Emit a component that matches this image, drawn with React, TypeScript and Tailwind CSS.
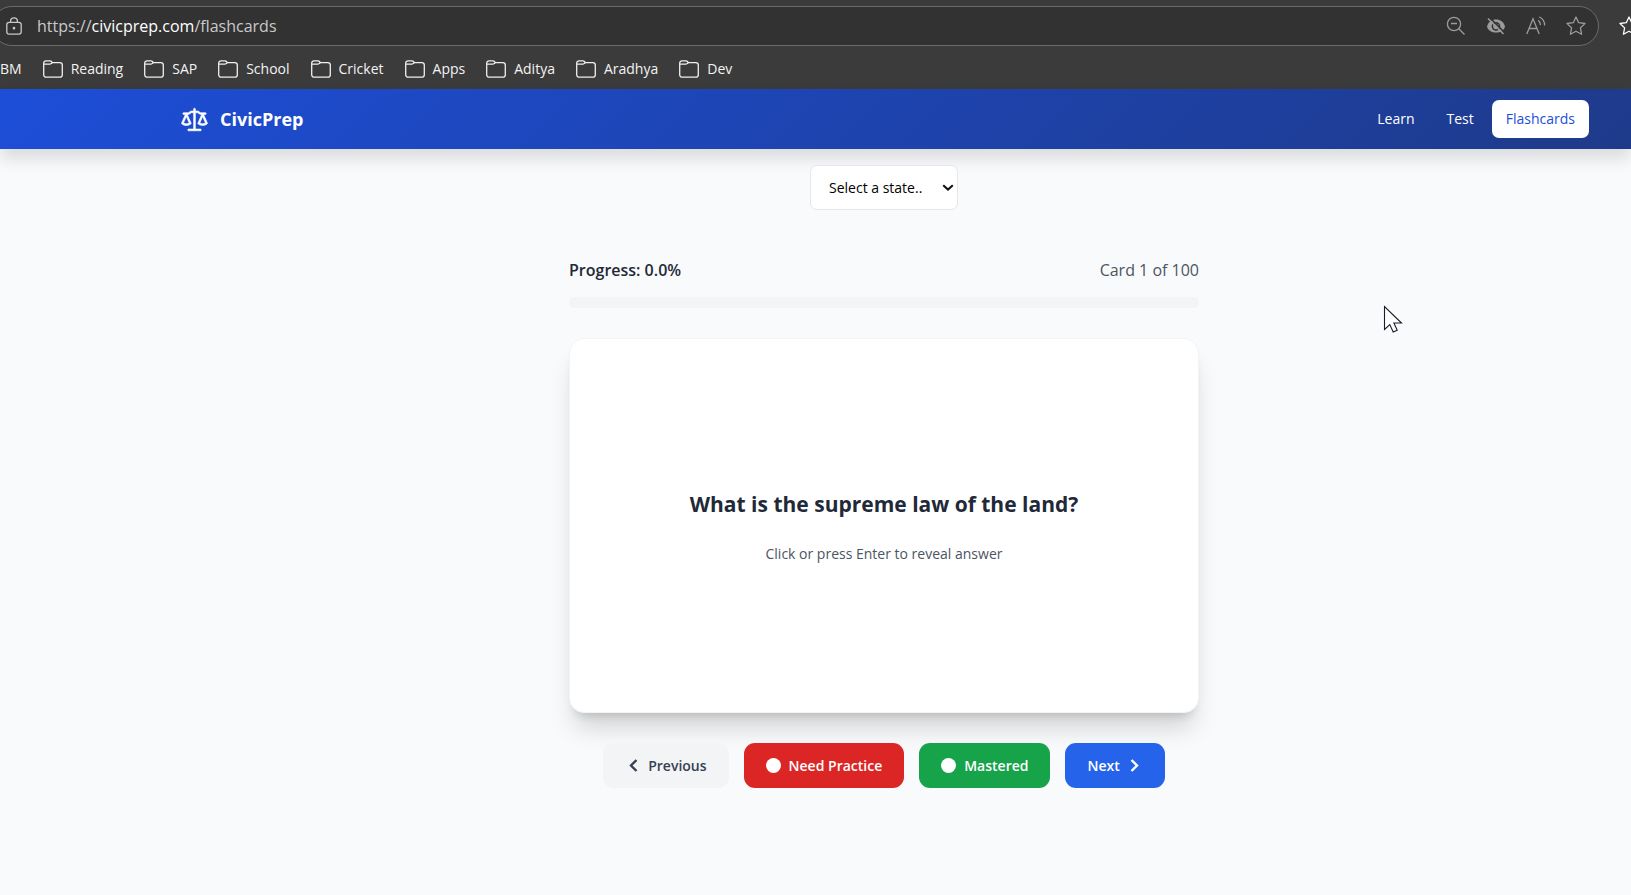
import { useState } from "react";
import { GoLaw } from "react-icons/go";

const folders = ["Reading", "SAP", "School", "Cricket", "Apps", "Aditya", "Aradhya", "Dev"];

function FolderIcon() {
  return (
    <svg className="h-[18px] w-5" viewBox="0 0 20 18" fill="none" stroke="#f0f0f0" strokeWidth="1.3">
      <path d="M0.7 3.2A2.4 2.4 0 0 1 3.1 0.8H6.8Q8 0.8 8.6 1.6L9.3 2.6H16.8A2.5 2.5 0 0 1 19.3 5.1V14.7A2.5 2.5 0 0 1 16.8 17.2H3.2A2.5 2.5 0 0 1 0.7 14.7Z" />
      <path d="M0.9 4.2H6.6Q7.6 4.2 8.3 3.4L9.3 2.5" />
    </svg>
  );
}

function StarIcon({ color }: { color: string }) {
  return (
    <svg className="size-5 shrink-0" viewBox="0 0 20 20" fill="none" stroke={color} strokeWidth="1.3" strokeLinejoin="round">
      <path d="M10 1 12.7 6.7 19 7.5 14.4 11.9 15.6 18.3 10 15.2 4.4 18.3 5.6 11.9 1 7.5 7.3 6.7Z" />
    </svg>
  );
}

function Chevron({ d }: { d: string }) {
  return (
    <svg className="h-[15px] w-[15px]" viewBox="0 0 15 15" fill="none" stroke="currentColor" strokeWidth="2.4">
      <path d={d} />
    </svg>
  );
}

function Dot() {
  return <span className="size-[15px] rounded-full bg-white" />;
}

function BrowserBar() {
  return (
    <header className="h-[89px] overflow-hidden bg-[#3b3b3b] pt-1.5">
      <div className="flex items-center gap-5">
        <div className="-ml-2 flex h-10 grow items-center rounded-full border border-[#6b6b6b] bg-[#323232] pr-3 pl-[13px]">
          <svg className="h-[18px] w-4" viewBox="0 0 16 18" fill="none" stroke="#c8c8c8" strokeWidth="1.3">
            <rect x="0.8" y="5.4" width="14.4" height="11.8" rx="2.4" />
            <path d="M4.6 5.4V4.2a3.4 3.4 0 0 1 6.8 0v1.2" />
            <circle cx="8" cy="11.2" r="0.7" fill="#c8c8c8" />
          </svg>
          <div className="grow pl-[15px] text-[16px] text-[#c9c9c9]">
            https://<span className="text-white">civicprep.com</span>/flashcards
          </div>
          <div className="flex items-center gap-5">
            <svg className="size-5" viewBox="0 0 20 20" fill="none" stroke="#9b9b9b" strokeWidth="1.3">
              <circle cx="8" cy="8" r="6.6" />
              <path d="M5 7.5h6M12.8 12.8 18.5 18.5" />
            </svg>
            <svg className="size-5" viewBox="0 0 20 20" fill="none">
              <path d="M1 10.5C2.2 6 5.8 3.5 10 3.5S17.8 6 19 10.5C17.9 14.6 14.2 16.5 10 16.5S2.1 14.6 1 10.5Z" fill="#9b9b9b" />
              <circle cx="10" cy="10.3" r="3.6" stroke="#323232" strokeWidth="1.5" />
              <path d="M3.5 1.5 19 17" stroke="#323232" strokeWidth="1.6" />
              <path d="M2 2.5 17.5 18" stroke="#9b9b9b" strokeWidth="1.6" />
            </svg>
            <svg className="size-5" viewBox="0 0 20 20" fill="none" stroke="#9b9b9b" strokeWidth="1.3">
              <path d="M0.8 18 7 2.8 13.2 18M3 12.5H11M12.2 4.2Q14.5 6 14.5 9M13.2 1Q18.8 3.5 18.6 9.5" />
            </svg>
            <StarIcon color="#9b9b9b" />
          </div>
        </div>
        <div className="flex w-3 justify-start">
          <StarIcon color="#ffffff" />
        </div>
      </div>
      <nav aria-label="Bookmarks" className="flex h-[45px] items-center gap-[21px] text-[14px] text-[#f3f3f3]">
        <a href="#bm">BM</a>
        {folders.map((name) => (
          <a key={name} href="#folder" className="flex items-center gap-2">
            <FolderIcon />
            {name}
          </a>
        ))}
      </nav>
    </header>
  );
}

export default function App() {
  const [card, setCard] = useState(1);
  const button = "flex h-[45px] items-center gap-2 rounded-[11px] px-[22px] text-[14px] font-semibold";
  return (
    <div className="flex min-h-screen flex-col overflow-hidden bg-[#f9fafb] font-['Open_Sans','Noto_Sans',sans-serif]">
      <BrowserBar />
      <div className="h-[60px] bg-[linear-gradient(135deg,#1d4ed8,#1e3a8a)] pl-[137px] shadow-[0_10px_15px_rgba(0,0,0,0.12)]">
        <div className="flex h-full items-center justify-between pr-[42px] pl-11 text-white">
          <a href="#home" className="flex items-center gap-3 text-[18px] font-bold">
            <GoLaw className="size-[27px]" stroke="currentColor" strokeWidth="0.6" />
            CivicPrep
          </a>
          <nav aria-label="Main" className="flex items-center gap-1 text-[14px] leading-[22px]">
            <a href="#learn" className="px-[14px] py-2">Learn</a>
            <a href="#test" className="px-[14px] py-2">Test</a>
            <a href="#flashcards" className="rounded-[7px] bg-white px-[14px] py-2 text-[#1d4ed8]">Flashcards</a>
          </nav>
        </div>
      </div>

      <main className="flex flex-col items-center pt-4 pl-[137px]">
        <div className="relative flex">
          <select aria-label="State" className="h-[45px] w-[148px] appearance-none rounded-[7px] border border-[#e5e7eb] bg-white pr-6 pl-[18px] text-[14px] text-black">
            <option>Select a state..</option>
          </select>
          <svg className="pointer-events-none absolute top-[19px] right-1 h-2 w-3" viewBox="0 0 12 8" fill="none" stroke="#111" strokeWidth="2">
            <path d="M1.2 1.2 6 5.6 10.8 1.2" />
          </svg>
        </div>

        <div className="mt-12 w-full max-w-[630px]">
          <div className="flex items-center justify-between text-[16px] leading-6">
            <span className="font-semibold text-[#1f2937]">Progress: 0.0%</span>
            <span className="text-[#4b5563]">Card {card} of 100</span>
          </div>
          <div className="mt-[15px] h-[11px] rounded-full bg-[#f3f4f6]" />
          <button className="mt-[30px] flex h-[375px] w-full flex-col items-center justify-center rounded-[15px] border border-[#f3f4f6] bg-white shadow-[0_20px_25px_-5px_rgba(0,0,0,0.15),0_8px_10px_-6px_rgba(0,0,0,0.15)]">
            <span className="text-[21px] leading-8 font-bold text-[#1f2937]">What is the supreme law of the land?</span>
            <span className="mt-6 text-[14px] leading-5 text-[#4b5563]">Click or press Enter to reveal answer</span>
          </button>
        </div>

        <div className="mt-[30px] flex gap-[15px]">
          <button onClick={() => setCard(Math.max(1, card - 1))} className={`${button} bg-[#f3f4f6] text-[#374151]`}>
            <Chevron d="M11.5 2 6 7.5 11.5 13" />
            Previous
          </button>
          <button className={`${button} bg-[#dc2626] text-white`}>
            <Dot />
            Need Practice
          </button>
          <button className={`${button} bg-[#16a34a] text-white`}>
            <Dot />
            Mastered
          </button>
          <button onClick={() => setCard(Math.min(100, card + 1))} className={`${button} bg-[#2563eb] text-white`}>
            Next
            <Chevron d="M3.5 2 9 7.5 3.5 13" />
          </button>
        </div>
      </main>

      <svg className="pointer-events-none absolute top-[305px] left-[1383px] h-7 w-5" viewBox="0 0 20 28" fill="white" stroke="#1a1a2a" strokeWidth="1.1">
        <path d="M1.5 1.5V24.5L6.8 19.6 10.2 27 14.2 25.3 10.9 18H18.5Z" />
      </svg>
    </div>
  );
}
